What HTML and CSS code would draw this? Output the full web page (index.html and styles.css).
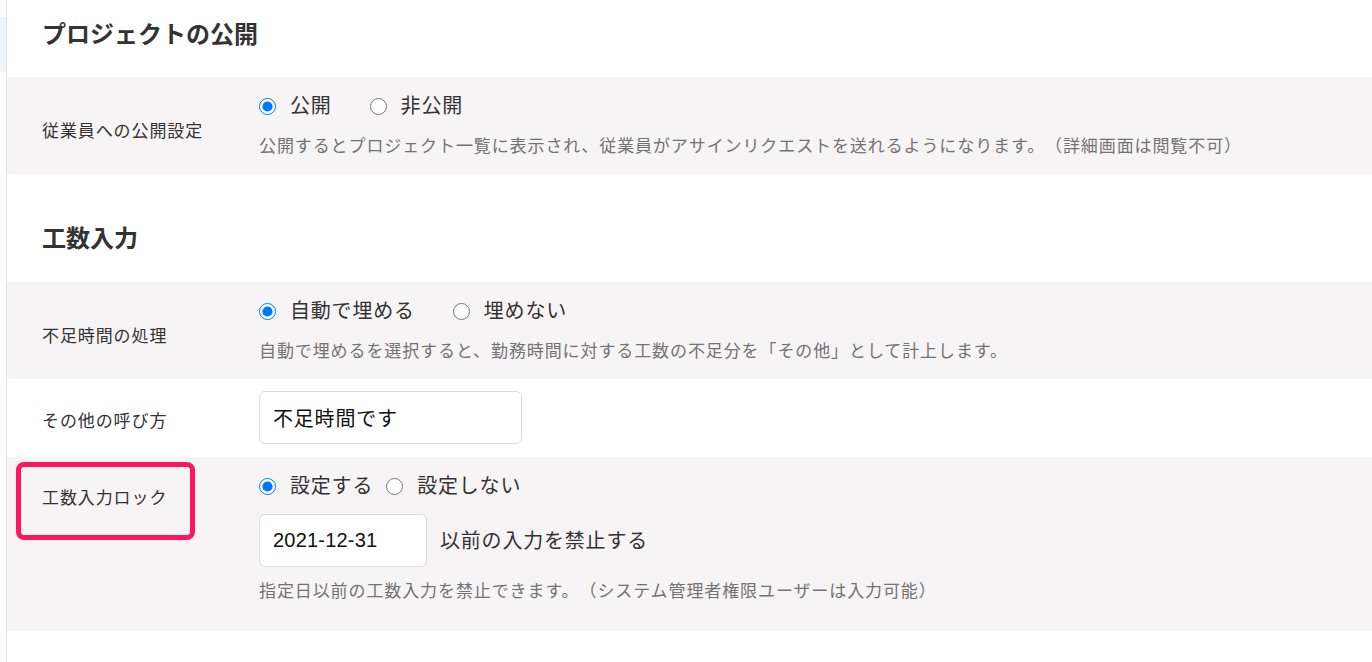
FILE: index.html
```html
<!DOCTYPE html>
<html lang="ja">

<head>
  <meta charset="UTF-8">
  <meta name="viewport" content="width=device-width, initial-scale=1.0">
  <title>プロジェクト設定</title>
  <link rel="stylesheet" href="styles.css">
</head>

<body>
  <div class="layout">
    <aside class="side">
      <div class="side-active"></div>
    </aside>

    <main class="content">
      <!-- プロジェクトの公開 -->
      <section class="section">
        <h2 class="section-title section-title--first">プロジェクトの公開</h2>
        <div class="setting">
          <div class="setting-label">従業員への公開設定</div>
          <div class="setting-body">
            <div class="radios">
              <label class="radio"><input type="radio" name="public" checked><span>公開</span></label>
              <label class="radio"><input type="radio" name="public"><span>非公開</span></label>
            </div>
            <p class="note">公開するとプロジェクト一覧に表示され、従業員がアサインリクエストを送れるようになります。（詳細画面は閲覧不可）</p>
          </div>
        </div>
      </section>

      <!-- 工数入力 -->
      <section class="section">
        <h2 class="section-title">工数入力</h2>
        <div class="setting">
          <div class="setting-label">不足時間の処理</div>
          <div class="setting-body">
            <div class="radios">
              <label class="radio"><input type="radio" name="shortage" checked><span>自動で埋める</span></label>
              <label class="radio"><input type="radio" name="shortage"><span>埋めない</span></label>
            </div>
            <p class="note">自動で埋めるを選択すると、勤務時間に対する工数の不足分を「その他」として計上します。</p>
          </div>
        </div>

        <div class="setting setting--plain">
          <div class="setting-label setting-label--input">その他の呼び方</div>
          <div class="setting-body setting-body--input">
            <input type="text" class="text-input" value="不足時間です">
          </div>
        </div>

        <div class="setting setting--lock">
          <div class="setting-label setting-label--lock">工数入力ロック</div>
          <div class="setting-body setting-body--lock">
            <div class="radios radios--tight">
              <label class="radio"><input type="radio" name="lock" checked><span>設定する</span></label>
              <label class="radio"><input type="radio" name="lock"><span>設定しない</span></label>
            </div>
            <div class="date-row">
              <input type="text" class="text-input text-input--date" value="2021-12-31">
              <span class="date-text">以前の入力を禁止する</span>
            </div>
            <p class="note note--lock">指定日以前の工数入力を禁止できます。（システム管理者権限ユーザーは入力可能）</p>
          </div>
          <!-- 注目枠 -->
          <div class="highlight"></div>
        </div>
      </section>
    </main>
  </div>
</body>

</html>
```

FILE: styles.css
```css
* {
  box-sizing: border-box;
}

body {
  margin: 0;
  font-family: "Liberation Sans", "Noto Sans CJK JP", sans-serif;
  color: #333;
  background: #fff;
  text-spacing-trim: space-all;
}

.layout {
  display: flex;
  min-height: 662px;
}

/* 左サイドバーの端 */
.side {
  width: 7px;
  border-right: 1px solid #e2e2e2;
  padding-top: 17px;
}

.side-active {
  width: 6px;
  height: 55px;
  background: #edf4fc;
}

.content {
  flex: 1;
}

.section-title {
  margin: 0;
  padding: 47px 0 25px 35px;
  font-size: 24px;
  line-height: 36px;
  font-weight: 700;
  color: #333;
}

.section-title--first {
  padding-top: 17px;
  padding-bottom: 24px;
}

.setting {
  display: grid;
  grid-template-columns: 217px 1fr;
  padding-left: 35px;
  background: #f6f4f5;
  position: relative;
}

.setting--plain {
  background: #fff;
}

.setting-label {
  padding-top: 42px;
  font-size: 17px;
  line-height: 26px;
  letter-spacing: 0.9px;
  color: #333;
}

.setting-label--input {
  padding-top: 30px;
}

.setting-label--lock {
  padding-top: 29px;
}

.setting-body {
  padding: 14px 0 14px;
}

.setting-body--input {
  padding: 12px 0 13px;
}

.setting-body--lock {
  padding-bottom: 26px;
}

.radios {
  display: flex;
  align-items: center;
  gap: 38px;
  height: 30px;
}

.radios--tight {
  gap: 13px;
}

.radio {
  display: flex;
  align-items: center;
  gap: 14px;
  font-size: 20px;
  line-height: 30px;
  letter-spacing: 0.8px;
  color: #333;
}

.radio input {
  width: 17px;
  height: 17px;
  margin: 0;
}

.note {
  margin: 13px 0 0;
  font-size: 17px;
  line-height: 26px;
  letter-spacing: 0.9px;
  color: #737373;
}

.note--lock {
  margin-top: 12px;
}

.text-input {
  display: block;
  width: 263px;
  height: 53px;
  padding: 0 13px;
  border: 1px solid #dcdcdc;
  border-radius: 6px;
  background: #fff;
  font-family: "Liberation Sans", "Noto Sans CJK JP", sans-serif;
  font-size: 20px;
  letter-spacing: 0.8px;
  color: #111;
  outline: none;
}

.text-input--date {
  width: 168px;
  letter-spacing: 0.2px;
}

.date-row {
  display: flex;
  align-items: center;
  gap: 13px;
  margin-top: 13px;
}

.date-text {
  font-size: 20px;
  line-height: 30px;
  letter-spacing: 0.8px;
  color: #333;
}

.highlight {
  position: absolute;
  top: 5px;
  left: 9px;
  width: 179px;
  height: 78px;
  border: 5px solid #ff145f;
  border-radius: 8px;
  pointer-events: none;
}
```
